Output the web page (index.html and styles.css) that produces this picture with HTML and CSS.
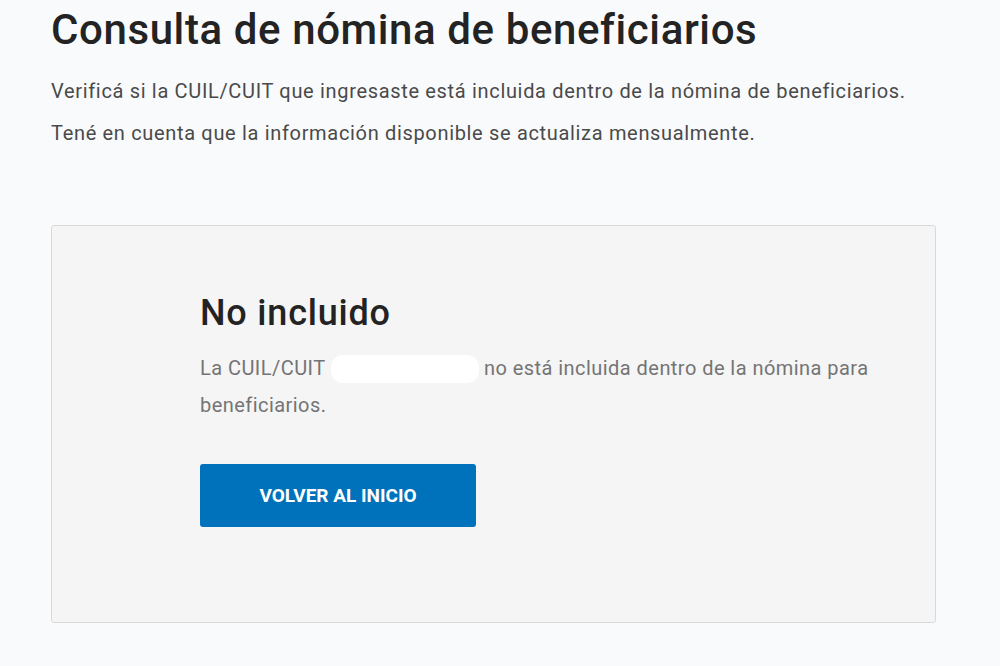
FILE: index.html
```html
<!DOCTYPE html>
<html lang="es">
<head>
<meta charset="utf-8">
<title>Consulta de nómina de beneficiarios</title>
<link rel="stylesheet" href="styles.css">
</head>
<body>
<main class="page">
  <h1 class="title">Consulta de nómina de beneficiarios</h1>
  <p class="lead">Verificá si la CUIL/CUIT que ingresaste está incluida dentro de la nómina de beneficiarios.</p>
  <p class="lead">Tené en cuenta que la información disponible se actualiza mensualmente.</p>
  <section class="card">
    <div class="card-body">
      <h2 class="card-title">No incluido</h2>
      <p class="card-text">La CUIL/CUIT <span class="redacted"></span> no está incluida dentro de la nómina para beneficiarios.</p>
      <a class="btn" href="#">VOLVER AL INICIO</a>
    </div>
  </section>
</main>
</body>
</html>
```
FILE: styles.css
```css
html, body {
  margin: 0;
  padding: 0;
  background: #f9fafc;
  font-family: Roboto, "Liberation Sans", Arial, sans-serif;
}
.page {
  padding: 0 64px 0 51px;
}
.title {
  margin: 0;
  padding-top: 6px;
  font-size: 42px;
  line-height: 48px;
  font-weight: 500;
  letter-spacing: 0.6px;
  color: #232323;
}
.lead {
  margin: 0;
  font-size: 20px;
  line-height: 42px;
  letter-spacing: 0.67px;
  color: #4a4a4a;
}
.title + .lead {
  margin-top: 16px;
}
.card {
  margin-top: 71px;
  height: 398px;
  box-sizing: border-box;
  background: #f5f5f5;
  border: 1px solid #d9d9d9;
  border-radius: 3px;
}
.card-body {
  padding: 66px 60px 0 148px;
}
.card-title {
  margin: 0;
  font-size: 36px;
  line-height: 42px;
  font-weight: 500;
  letter-spacing: 0.8px;
  color: #232323;
}
.card-text {
  margin: 16px 0 0;
  font-size: 20px;
  line-height: 37px;
  letter-spacing: 0.45px;
  color: #747474;
}
.redacted {
  display: inline-block;
  width: 148px;
  height: 28px;
  vertical-align: -8px;
  background: #ffffff;
  border-radius: 12px;
}
.btn {
  display: inline-flex;
  align-items: center;
  justify-content: center;
  margin-top: 40px;
  width: 276px;
  height: 63px;
  background: #0072bb;
  color: #ffffff;
  border-radius: 3px;
  font-size: 19px;
  font-weight: 700;
  text-decoration: none;
  letter-spacing: 0;
}
```
